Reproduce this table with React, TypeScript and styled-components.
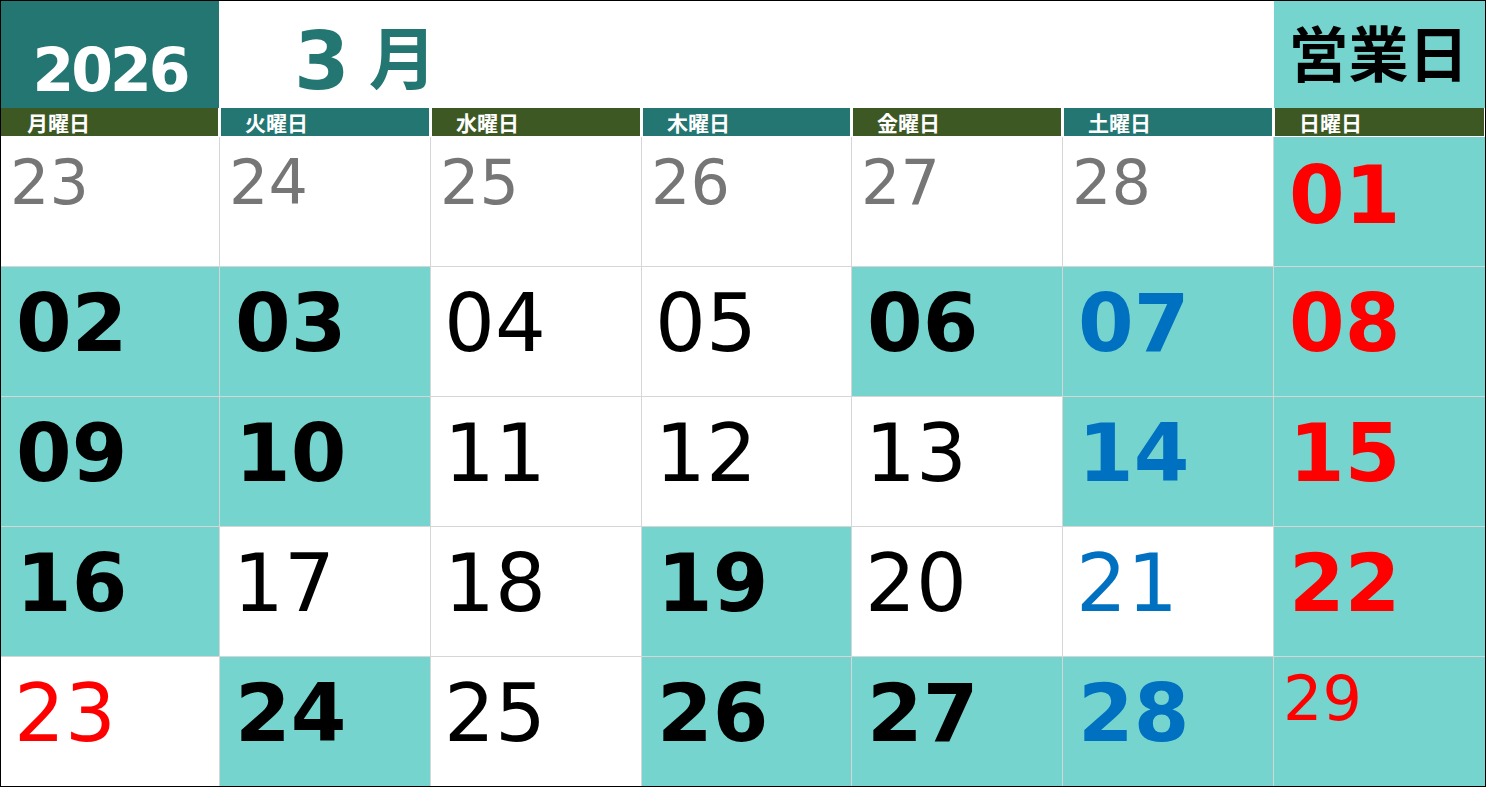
import React from "react";
import styled, { createGlobalStyle } from "styled-components";

const GlobalStyle = createGlobalStyle`
  html, body { margin: 0; padding: 0; background: #ffffff; }
  body { font-family: "DejaVu Sans", "Noto Sans CJK JP", sans-serif; }
`;

const COLS = "218px 210px 210px 209px 210px 210px 211px";
const TEAL_DARK = "#237672";
const OLIVE = "#3e5823";
const TEAL_LIGHT = "#76d4ce";

const Frame = styled.div`
  width: 1486px;
  height: 787px;
  box-sizing: border-box;
  border: 1px solid #000000;
  display: flex;
  flex-direction: column;
  background: #ffffff;
  overflow: hidden;
`;

const TopBar = styled.div`
  display: grid;
  grid-template-columns: ${COLS};
  column-gap: 1px;
  height: 107px;
`;

const YearBox = styled.div`
  background: ${TEAL_DARK};
  color: #ffffff;
  font-family: "DejaVu Sans", sans-serif;
  font-weight: 700;
  font-size: 60px;
  letter-spacing: -3px;
  display: flex;
  align-items: flex-end;
  justify-content: center;
  line-height: 1;
  padding-bottom: 8px;
  box-sizing: border-box;
`;

const MonthTitle = styled.div`
  grid-column: 2 / span 5;
  color: ${TEAL_DARK};
  font-weight: 700;
  line-height: 1;
  display: flex;
  align-items: flex-end;
  padding-left: 74px;
  box-sizing: border-box;
  gap: 19px;
`;

const MonthNumber = styled.span`
  font-family: "DejaVu Sans", sans-serif;
  font-size: 80px;
  margin-bottom: 6px;
`;

const MonthUnit = styled.span`
  font-family: "Noto Sans CJK JP", sans-serif;
  font-size: 68px;
  margin-bottom: 19px;
`;

const BusinessLabel = styled.div`
  background: ${TEAL_LIGHT};
  color: #000000;
  font-family: "Noto Sans CJK JP", sans-serif;
  font-weight: 700;
  font-size: 60px;
  line-height: 1;
  display: flex;
  align-items: center;
  justify-content: center;
  padding-bottom: 8px;
  padding-right: 2px;
  box-sizing: border-box;
`;

const WeekBar = styled.div`
  display: grid;
  grid-template-columns: ${COLS};
  column-gap: 1px;
  height: 28px;
  margin-bottom: 1px;
`;

const DayName = styled.div<{ $tone: "olive" | "teal"; $first?: boolean }>`
  background: ${(p) => (p.$tone === "olive" ? OLIVE : TEAL_DARK)};
  color: #ffffff;
  font-family: "Noto Sans CJK JP", sans-serif;
  font-weight: 700;
  font-size: 21px;
  line-height: 27px;
  padding-top: 1px;
  box-sizing: border-box;
  padding-left: ${(p) => (p.$first ? "26px" : "24px")};
  margin-left: ${(p) => (p.$first ? "0" : "1px")};
  margin-right: 1px;
  white-space: nowrap;
`;

const DayGrid = styled.div`
  flex: 1;
  display: grid;
  grid-template-columns: ${COLS};
  grid-template-rows: repeat(5, 1fr);
  gap: 1px;
  background: #d6d6d6;
`;

const COLORS = {
  gray: "#767676",
  black: "#000000",
  red: "#ff0000",
  blue: "#0070c0",
} as const;

type Tone = keyof typeof COLORS;

const DayCell = styled.div<{
  $marked: boolean;
  $tone: Tone;
  $bold: boolean;
  $small: boolean;
  $top: number;
}>`
  background: ${(p) => (p.$marked ? TEAL_LIGHT : "#ffffff")};
  color: ${(p) => COLORS[p.$tone]};
  font-family: "DejaVu Sans", sans-serif;
  font-weight: ${(p) => (p.$bold ? 700 : 400)};
  font-size: ${(p) => (p.$small ? "62px" : "80px")};
  line-height: 1;
  padding-top: ${(p) => p.$top}px;
  padding-left: ${(p) => (p.$small ? "9px" : p.$bold ? "15px" : "13px")};
  box-sizing: border-box;
`;

type Day = {
  n: string;
  tone: Tone;
  bold?: boolean;
  marked?: boolean;
  small?: boolean;
  top?: number;
};

const days: Day[] = [
  { n: "23", tone: "gray", small: true, top: 15 },
  { n: "24", tone: "gray", small: true, top: 15 },
  { n: "25", tone: "gray", small: true, top: 15 },
  { n: "26", tone: "gray", small: true, top: 15 },
  { n: "27", tone: "gray", small: true, top: 15 },
  { n: "28", tone: "gray", small: true, top: 15 },
  { n: "01", tone: "red", bold: true, marked: true, top: 19 },

  { n: "02", tone: "black", bold: true, marked: true },
  { n: "03", tone: "black", bold: true, marked: true },
  { n: "04", tone: "black" },
  { n: "05", tone: "black" },
  { n: "06", tone: "black", bold: true, marked: true },
  { n: "07", tone: "blue", bold: true, marked: true },
  { n: "08", tone: "red", bold: true, marked: true },

  { n: "09", tone: "black", bold: true, marked: true },
  { n: "10", tone: "black", bold: true, marked: true },
  { n: "11", tone: "black" },
  { n: "12", tone: "black" },
  { n: "13", tone: "black" },
  { n: "14", tone: "blue", bold: true, marked: true },
  { n: "15", tone: "red", bold: true, marked: true },

  { n: "16", tone: "black", bold: true, marked: true },
  { n: "17", tone: "black" },
  { n: "18", tone: "black" },
  { n: "19", tone: "black", bold: true, marked: true },
  { n: "20", tone: "black" },
  { n: "21", tone: "blue" },
  { n: "22", tone: "red", bold: true, marked: true },

  { n: "23", tone: "red" },
  { n: "24", tone: "black", bold: true, marked: true },
  { n: "25", tone: "black" },
  { n: "26", tone: "black", bold: true, marked: true },
  { n: "27", tone: "black", bold: true, marked: true },
  { n: "28", tone: "blue", bold: true, marked: true },
  { n: "29", tone: "red", small: true, marked: true, top: 11 },
];

const weekNames: { label: string; tone: "olive" | "teal" }[] = [
  { label: "月曜日", tone: "olive" },
  { label: "火曜日", tone: "teal" },
  { label: "水曜日", tone: "olive" },
  { label: "木曜日", tone: "teal" },
  { label: "金曜日", tone: "olive" },
  { label: "土曜日", tone: "teal" },
  { label: "日曜日", tone: "olive" },
];

export default function App() {
  return (
    <>
      <GlobalStyle />
      <Frame>
        <TopBar>
          <YearBox>2026</YearBox>
          <MonthTitle>
            <MonthNumber>3</MonthNumber>
            <MonthUnit>月</MonthUnit>
          </MonthTitle>
          <BusinessLabel>営業日</BusinessLabel>
        </TopBar>
        <WeekBar>
          {weekNames.map((w, i) => (
            <DayName key={w.label} $tone={w.tone} $first={i === 0}>
              {w.label}
            </DayName>
          ))}
        </WeekBar>
        <DayGrid>
          {days.map((d, i) => (
            <DayCell
              key={i}
              $marked={!!d.marked}
              $tone={d.tone}
              $bold={!!d.bold}
              $small={!!d.small}
              $top={d.top ?? 17}
            >
              {d.n}
            </DayCell>
          ))}
        </DayGrid>
      </Frame>
    </>
  );
}
